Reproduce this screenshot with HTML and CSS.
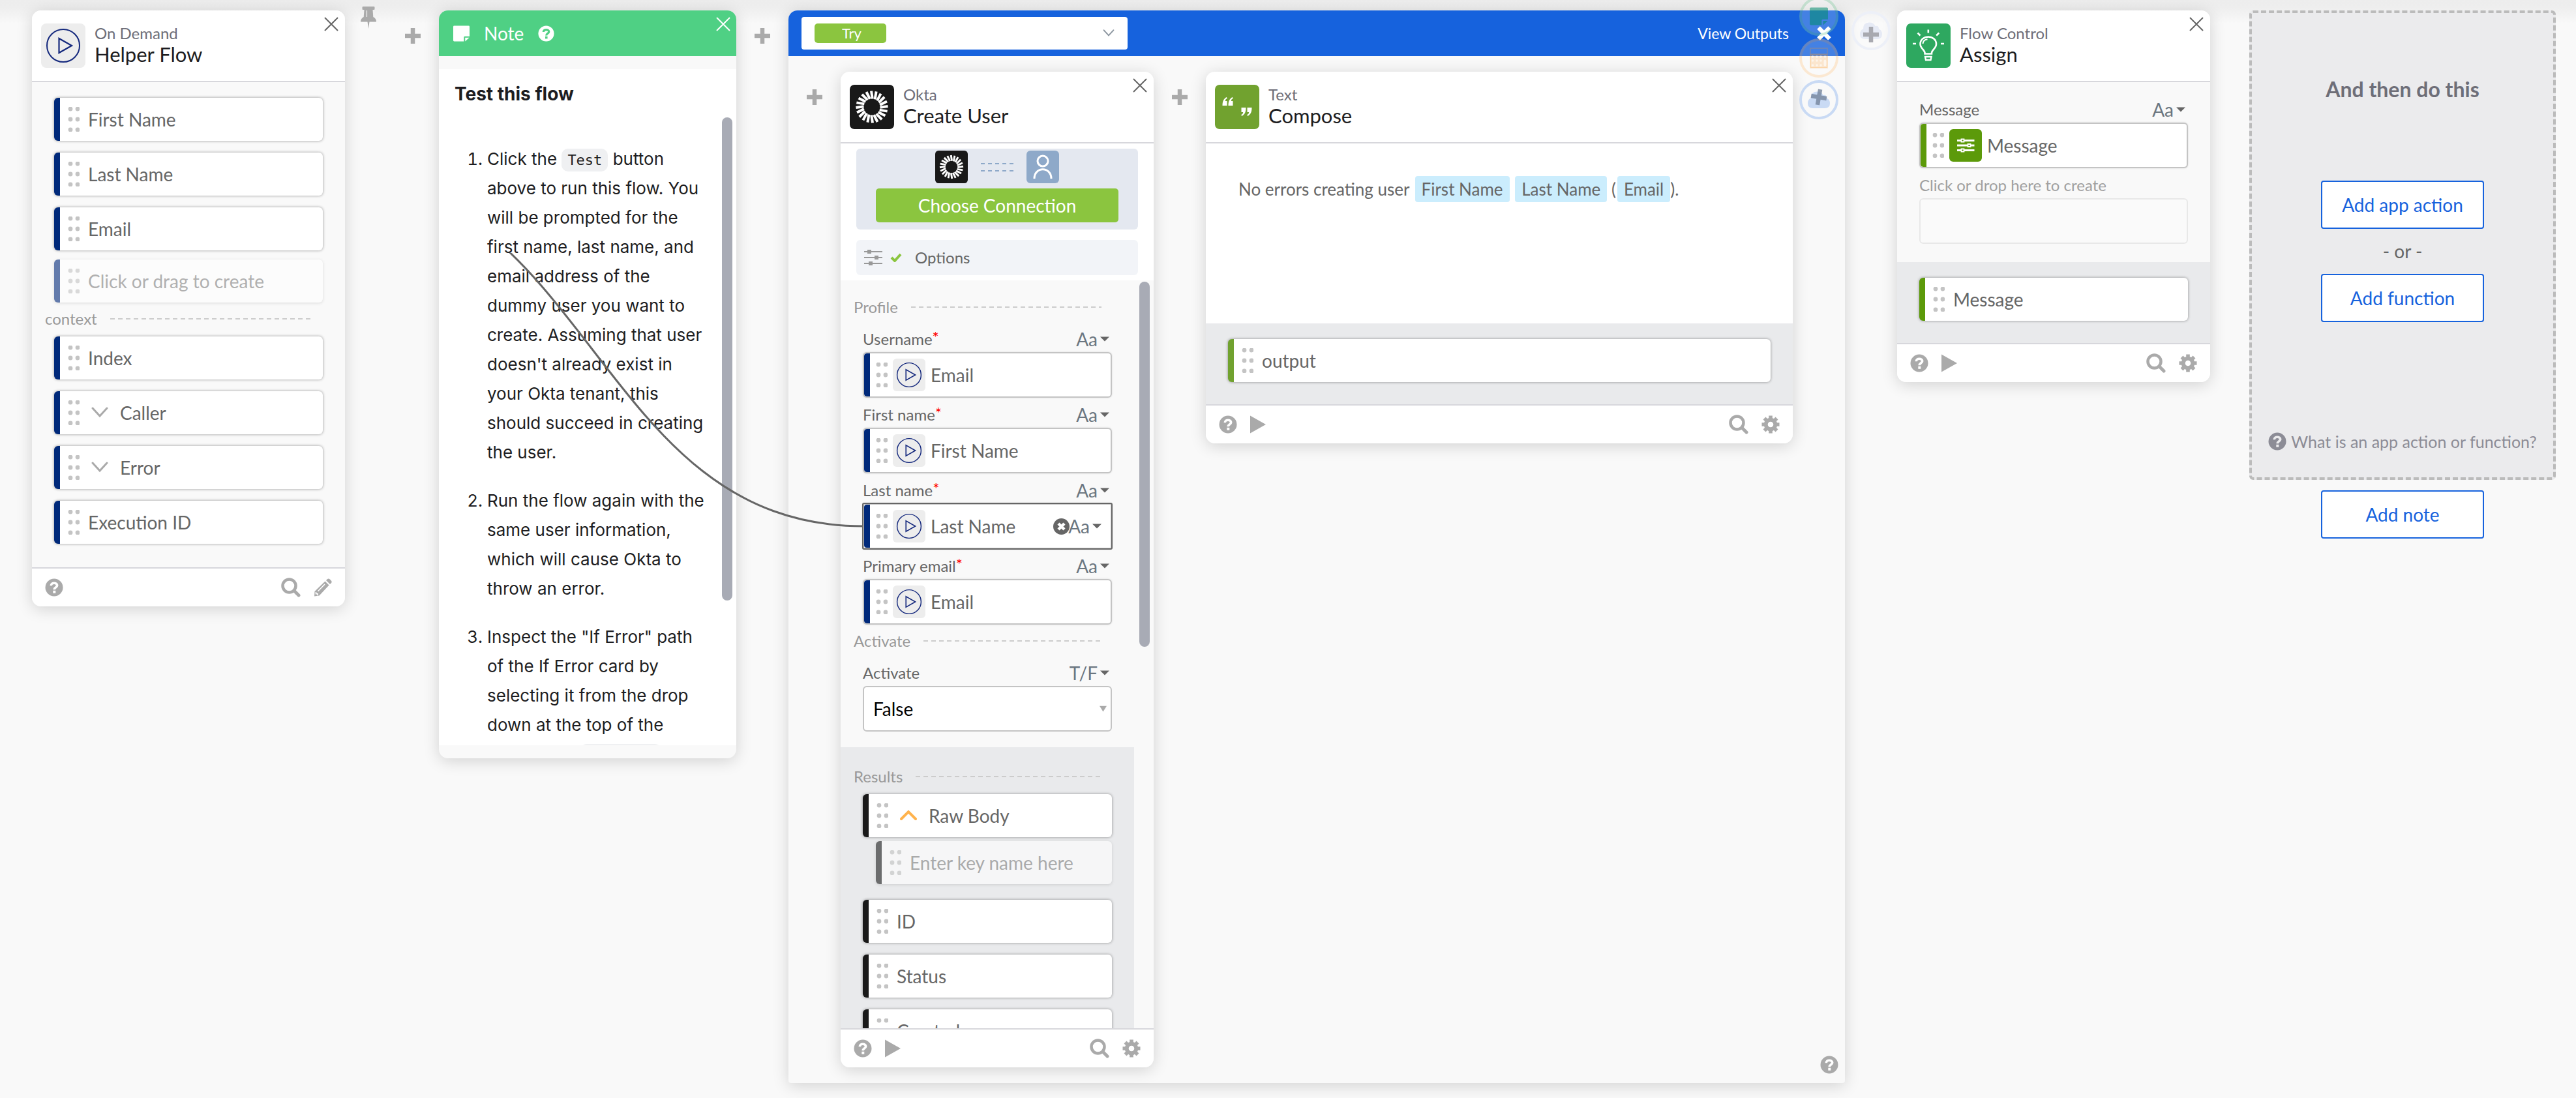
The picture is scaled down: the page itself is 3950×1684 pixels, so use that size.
FILE: index.html
```html
<!DOCTYPE html>
<html lang="en">
<head>
<meta charset="utf-8">
<title>Helper Flow</title>
<link rel="stylesheet" href="styles.css">
</head>
<body>
<svg class="sprite" aria-hidden="true">
  <symbol id="dots" viewBox="0 0 18 38"><g fill="#c4c4c4"><circle cx="4" cy="3" r="3.400"/><circle cx="15" cy="3" r="3.400"/><circle cx="4" cy="19" r="3.400"/><circle cx="15" cy="19" r="3.400"/><circle cx="4" cy="35" r="3.400"/><circle cx="15" cy="35" r="3.400"/></g></symbol>
  <symbol id="close" viewBox="0 0 22 22"><path d="M1 1 21 21M21 1 1 21" fill="none" stroke="currentColor" stroke-width="2"/></symbol>
  <symbol id="plus" viewBox="0 0 24 24"><path d="M2.500 12H21.500M12 2.500V21.500" fill="none" stroke="currentColor" stroke-width="6.500" stroke-linecap="square" stroke-linejoin="round"/></symbol>
  <symbol id="help" viewBox="0 0 28 28"><circle cx="14" cy="14" r="13.500" fill="currentColor"/><path d="M9.300 11.200C9.300 6 18.700 6.200 18.700 10.800C18.700 13.800 14.200 13.600 14.200 17.300" fill="none" stroke="var(--mark,#fff)" stroke-width="3.600"/><path d="M12.300 18.800h4v4h-4z" fill="var(--mark,#fff)"/></symbol>
  <symbol id="run" viewBox="0 0 24 28"><path d="M0 0.500 24 14 0 27.500Z" fill="currentColor"/></symbol>
  <symbol id="search" viewBox="0 0 30 30"><circle cx="12.500" cy="12.500" r="10" fill="none" stroke="currentColor" stroke-width="4.500"/><path d="M20 20 27 27" stroke="currentColor" stroke-width="5" stroke-linecap="round"/></symbol>
  <symbol id="gear" viewBox="0 0 28 28"><circle cx="14" cy="14" r="7.300" fill="none" stroke="currentColor" stroke-width="6"/><g stroke="currentColor" stroke-width="5.600"><path d="M14 .5V5M14 23v4.500M.5 14H5M23 14h4.500M4.500 4.500 7.700 7.700M20.300 20.300l3.200 3.200M23.500 4.500 20.300 7.700M7.700 20.300 4.500 23.500"/></g></symbol>
  <symbol id="pencil" viewBox="0 0 28 28"><g fill="currentColor"><path d="M17.500 4.500 23.500 10.500 8.500 26.500 1 27.500 1.500 20Z"/><path d="M19 3 21.200 1Q23 -.3 24.800 1.500L27 3.800Q28.300 5.500 26.800 7.200L25 9Z"/></g><path d="M17 9 6.500 19.800M3.500 21v2.700h2.600v2.600" fill="none" stroke="#fff" stroke-width="1.600"/></symbol>
  <symbol id="pin" viewBox="0 0 24 34"><path d="M3.500 0h17q1 0 1 1.500v2q0 1.500-1 1.500H18.500l.8 11Q24 18 24 23.500H0Q0 18 4.700 16L5.500 5H3.500q-1 0-1-1.500v-2Q2.500 0 3.500 0ZM10.500 23.500h3L12 34Z" fill="currentColor"/><path d="M9.500 6v10" stroke="#f6f6f6" stroke-width="1.200"/></symbol>
  <symbol id="caret" viewBox="0 0 13 8" preserveAspectRatio="none"><path d="M0 .5H13L6.500 7.500Z" fill="currentColor"/></symbol>
  <symbol id="down" viewBox="0 0 26 18"><path d="M2 2 13 14 24 2" fill="none" stroke="currentColor" stroke-width="3" stroke-linecap="round"/></symbol>
  <symbol id="up" viewBox="0 0 26 18"><path d="M2 14 13 3 24 14" fill="none" stroke="currentColor" stroke-width="4" stroke-linecap="round"/></symbol>
  <symbol id="play" viewBox="0 0 68 68"><rect width="68" height="68" rx="8" fill="#ededed"/><circle cx="34" cy="34" r="25" fill="none" stroke="#14287d" stroke-width="2"/><path d="M27.500 23V45L47 34Z" fill="none" stroke="#14287d" stroke-width="2.200"/></symbol>
  <symbol id="okta" viewBox="0 0 68 68"><rect width="68" height="68" rx="7" fill="#191919"/><g stroke="#fff" stroke-width="4"><g id="rays"><path id="ray" d="M33 9.500 34.800 21.500"/><use href="#ray" transform="rotate(18 34 34)"/><use href="#ray" transform="rotate(36 34 34)"/><use href="#ray" transform="rotate(54 34 34)"/><use href="#ray" transform="rotate(72 34 34)"/></g><use href="#rays" transform="rotate(90 34 34)"/><use href="#rays" transform="rotate(180 34 34)"/><use href="#rays" transform="rotate(270 34 34)"/></g></symbol>
  <symbol id="quotes" viewBox="0 0 68 68"><rect width="68" height="68" rx="7" fill="#71a22f"/><g fill="#fff"><path id="q" d="M18 19C13.500 21 11.500 25 11.500 32H18.500V25H15.800C15.900 23 16.800 21.800 18.700 21Z"/><use href="#q" x="9"/><use href="#q" transform="rotate(180 34 33.500)"/><use href="#q" transform="rotate(180 34 33.500) translate(9)"/></g></symbol>
  <symbol id="bulb" viewBox="0 0 68 68"><rect width="68" height="68" rx="7" fill="#2ea860"/><g fill="none" stroke="#fff" stroke-width="2.600"><path d="M28.500 46.500V45C28.500 41 21.500 38 21.500 31.500C21.500 25 27 20.500 33.800 20.500S46 25 46 31.500C46 38 39 41 39 45V46.500Z"/><path d="M25.500 31Q26 25 32.500 24.300" stroke-width="2"/><path d="M29 51H38.500L37.500 56H30Z" stroke-width="2.400"/><path d="M33.800 9.500v5M17.500 14.500l4 4M50.200 14.500l-4 4M10 31h5M53 31h5"/></g></symbol>
  <symbol id="person" viewBox="0 0 50 50"><rect width="50" height="50" rx="6" fill="#8ea9c9"/><g fill="none" stroke="#fff" stroke-width="3"><circle cx="25" cy="16" r="8"/><path d="M12 43C12 24 38 24 38 43"/></g></symbol>
  <symbol id="levels" viewBox="0 0 28 26"><path d="M0 4H28M0 13H28M0 22H28" stroke="currentColor" stroke-width="2"/><path d="M5 1h6v6H5zM16 10h6v6h-6zM7 19h6v6H7z" fill="currentColor"/></symbol>
  <symbol id="variable" viewBox="0 0 50 50"><rect width="50" height="50" rx="6" fill="#5c9a0a"/><g stroke="#fff"><path d="M12 17.500H38.500M12 25H38.500M12 32.500H38.500" stroke-width="3"/><path d="M18.500 15.500h4v4h-4zM28.500 23h4v4h-4zM18.500 30.500h4v4h-4z" fill="#5c9a0a" stroke-width="1.800"/></g></symbol>
  <symbol id="check" viewBox="0 0 18 14"><path d="M2 7 7 12 16 2" fill="none" stroke="#8bc53f" stroke-width="4"/></symbol>
  <symbol id="sticky" viewBox="0 0 26 25"><path d="M1.500 0H24.500Q26 0 26 1.500V17H18.500Q17 17 17 18.500V25H1.500Q0 25 0 23.500V1.500Q0 0 1.500 0ZM19 19H25.500L19 25Z" fill="currentColor"/></symbol>
  <symbol id="calc" viewBox="0 0 28 32"><path d="M1 1H27V31H1ZM1 10H27" fill="none" stroke="currentColor" stroke-width="2"/><path d="M1 10H27V31H1Z" fill="currentColor"/><g fill="var(--mark,#fff)"><circle cx="4.500" cy="14" r="1.800"/><circle cx="11" cy="14" r="1.800"/><circle cx="17" cy="14" r="1.800"/><circle cx="23.500" cy="14" r="1.800"/><circle cx="4.500" cy="20" r="1.800"/><circle cx="11" cy="20" r="1.800"/><circle cx="17" cy="20" r="1.800"/><circle cx="4.500" cy="27" r="1.800"/><circle cx="11" cy="27" r="1.800"/><circle cx="17" cy="27" r="1.800"/><rect x="21.500" y="18.500" width="4" height="10" rx="2"/></g></symbol>
  <symbol id="cloud" viewBox="0 0 34 26"><path d="M8 26Q0 26 0 18.500Q0 12 5 10.500Q4.500 1 14 .5Q21 .3 23.500 6Q29 4.500 29 10.500Q34 12.500 34 18.500Q34 26 26 26Z" fill="currentColor"/></symbol>
  <symbol id="clear" viewBox="0 0 25 25"><circle cx="12.500" cy="12.500" r="12.500" fill="#666"/><path d="M8 8 17 17M17 8 8 17" stroke="#fff" stroke-width="4.500"/></symbol>
</svg>

<main class="canvas">
  <article class="card navy">
    <header class="card-head">
      <svg class="app"><use href="#play"/></svg>
      <div class="names"><p>On Demand</p><h2>Helper Flow</h2></div>
      <button class="close" aria-label="Close"><svg><use href="#close"/></svg></button>
    </header>
    <div class="card-body inputs">
      <ul class="slots">
        <li class="slot"><svg class="dots"><use href="#dots"/></svg>First Name</li>
        <li class="slot"><svg class="dots"><use href="#dots"/></svg>Last Name</li>
        <li class="slot"><svg class="dots"><use href="#dots"/></svg>Email</li>
        <li class="slot draft"><svg class="dots"><use href="#dots"/></svg><input type="text" aria-label="New input" placeholder="Click or drag to create"></li>
      </ul>
      <h3 class="divider">context</h3>
      <ul class="slots">
        <li class="slot"><svg class="dots"><use href="#dots"/></svg>Index</li>
        <li class="slot"><svg class="dots"><use href="#dots"/></svg><svg class="fold"><use href="#down"/></svg>Caller</li>
        <li class="slot"><svg class="dots"><use href="#dots"/></svg><svg class="fold"><use href="#down"/></svg>Error</li>
        <li class="slot"><svg class="dots"><use href="#dots"/></svg>Execution ID</li>
      </ul>
    </div>
    <footer class="card-foot">
      <button aria-label="Help"><svg class="i28"><use href="#help"/></svg></button>
      <button class="end" aria-label="Search"><svg class="i30"><use href="#search"/></svg></button>
      <button aria-label="Edit"><svg class="i28"><use href="#pencil"/></svg></button>
    </footer>
  </article>

  <div class="link start">
    <button class="pin" aria-label="Pin"><svg><use href="#pin"/></svg></button>
    <button class="add" aria-label="Add step"><svg><use href="#plus"/></svg></button>
  </div>

  <article class="card note">
    <header class="note-head">
      <svg class="sticky"><use href="#sticky"/></svg>
      <h2>Note</h2>
      <button class="help" aria-label="Help"><svg><use href="#help"/></svg></button>
      <button class="close" aria-label="Close"><svg><use href="#close"/></svg></button>
    </header>
    <div class="note-body">
      <h3>Test this flow</h3>
      <div class="note-scroll">
        <ol>
          <li>Click the <code>Test</code> button above to run this flow. You will be prompted for the first name, last name, and email address of the dummy user you want to create. Assuming that user doesn't already exist in your Okta tenant, this should succeed in creating the user.</li>
          <li>Run the flow again with the same user information, which will cause Okta to throw an error.</li>
          <li>Inspect the "If Error" path of the If Error card by selecting it from the drop down at the top of the card. Open <code>If Error</code></li>
        </ol>
        <div class="thumb"></div>
      </div>
    </div>
  </article>

  <div class="link"><button class="add" aria-label="Add step"><svg><use href="#plus"/></svg></button></div>

  <section class="group">
    <header class="group-head">
      <div class="route">
        <select aria-label="Path"><option>Try</option><option>If Error</option></select>
        <svg><use href="#down"/></svg>
      </div>
      <button class="outputs">View Outputs</button>
      <button class="close" aria-label="Close"><svg><use href="#plus"/></svg></button>
    </header>
    <div class="group-body">
      <div class="link inner"><button class="add" aria-label="Add step"><svg><use href="#plus"/></svg></button></div>

      <article class="card navy create">
        <header class="card-head">
          <svg class="app"><use href="#okta"/></svg>
          <div class="names"><p>Okta</p><h2>Create User</h2></div>
          <button class="close" aria-label="Close"><svg><use href="#close"/></svg></button>
        </header>
        <div class="setup">
          <div class="connection">
            <div class="pair"><svg><use href="#okta"/></svg><i class="wire"></i><svg><use href="#person"/></svg></div>
            <button class="choose">Choose Connection</button>
          </div>
          <button class="options"><svg class="levels"><use href="#levels"/></svg><svg class="check"><use href="#check"/></svg>Options</button>
        </div>
        <div class="scroll">
          <div class="scroll-content">
            <section class="fields">
              <h3 class="divider">Profile</h3>
              <div class="label"><span id="l1">Username<sup>*</sup></span><button class="type">Aa<svg><use href="#caret"/></svg></button></div>
              <div class="field" role="group" aria-labelledby="l1"><svg class="dots"><use href="#dots"/></svg><svg class="chip"><use href="#play"/></svg>Email</div>
              <div class="label"><span id="l2">First name<sup>*</sup></span><button class="type">Aa<svg><use href="#caret"/></svg></button></div>
              <div class="field" role="group" aria-labelledby="l2"><svg class="dots"><use href="#dots"/></svg><svg class="chip"><use href="#play"/></svg>First Name</div>
              <div class="label"><span id="l3">Last name<sup>*</sup></span><button class="type">Aa<svg><use href="#caret"/></svg></button></div>
              <div class="field current" role="group" aria-labelledby="l3"><svg class="dots"><use href="#dots"/></svg><svg class="chip"><use href="#play"/></svg>Last Name
                <button class="clear" aria-label="Clear"><svg><use href="#clear"/></svg></button><button class="type">Aa<svg><use href="#caret"/></svg></button></div>
              <div class="label"><span id="l4">Primary email<sup>*</sup></span><button class="type">Aa<svg><use href="#caret"/></svg></button></div>
              <div class="field" role="group" aria-labelledby="l4"><svg class="dots"><use href="#dots"/></svg><svg class="chip"><use href="#play"/></svg>Email</div>
              <h3 class="divider">Activate</h3>
              <div class="label"><label for="activate">Activate</label><button class="type">T/F<svg><use href="#caret"/></svg></button></div>
              <div class="choice"><select id="activate"><option>False</option><option>True</option></select><svg><use href="#caret"/></svg></div>
            </section>
            <section class="results black">
              <h3 class="divider">Results</h3>
              <ul class="slots">
                <li class="slot"><svg class="dots"><use href="#dots"/></svg><svg class="fold open"><use href="#up"/></svg>Raw Body</li>
                <li class="slot draft child"><svg class="dots"><use href="#dots"/></svg><input type="text" aria-label="Key name" placeholder="Enter key name here"></li>
                <li class="slot after"><svg class="dots"><use href="#dots"/></svg>ID</li>
                <li class="slot"><svg class="dots"><use href="#dots"/></svg>Status</li>
                <li class="slot"><svg class="dots"><use href="#dots"/></svg>Created</li>
              </ul>
            </section>
          </div>
          <div class="track"><div class="thumb"></div></div>
        </div>
        <footer class="card-foot">
          <button aria-label="Help"><svg class="i28"><use href="#help"/></svg></button>
          <button aria-label="Run"><svg class="run"><use href="#run"/></svg></button>
          <button class="end" aria-label="Search"><svg class="i30"><use href="#search"/></svg></button>
          <button aria-label="Settings"><svg class="i28"><use href="#gear"/></svg></button>
        </footer>
      </article>

      <div class="link inner"><button class="add" aria-label="Add step"><svg><use href="#plus"/></svg></button></div>

      <article class="card compose olive">
        <header class="card-head">
          <svg class="app"><use href="#quotes"/></svg>
          <div class="names"><p>Text</p><h2>Compose</h2></div>
          <button class="close" aria-label="Close"><svg><use href="#close"/></svg></button>
        </header>
        <p class="template">No errors creating user <span class="token">First Name</span> <span class="token">Last Name</span> (<span class="token">Email</span>).</p>
        <div class="out">
          <ul class="slots"><li class="slot"><svg class="dots"><use href="#dots"/></svg>output</li></ul>
        </div>
        <footer class="card-foot">
          <button aria-label="Help"><svg class="i28"><use href="#help"/></svg></button>
          <button aria-label="Run"><svg class="run"><use href="#run"/></svg></button>
          <button class="end" aria-label="Search"><svg class="i30"><use href="#search"/></svg></button>
          <button aria-label="Settings"><svg class="i28"><use href="#gear"/></svg></button>
        </footer>
      </article>

      <div class="link inner last">
        <nav class="rings" aria-label="Insert">
          <button class="ring green" aria-label="Add note"><svg class="i28"><use href="#sticky"/></svg></button>
          <button class="ring orange" aria-label="Add function"><svg class="i32"><use href="#calc"/></svg></button>
          <button class="ring blue" aria-label="Add app action"><svg class="i34"><use href="#cloud"/></svg><svg class="over tilt"><use href="#plus"/></svg></button>
        </nav>
        <button class="group-help" aria-label="Help"><svg class="i28"><use href="#help"/></svg></button>
      </div>
    </div>
    <svg class="wire-line" viewBox="781 388 543 422" aria-hidden="true"><path d="M495 267C909 267 909 807 1324 807" fill="none" stroke="#666" stroke-width="3"/></svg>
  </section>

  <div class="link"><button class="ring faint" aria-label="Add app action"><svg class="i34"><use href="#cloud"/></svg><svg class="over"><use href="#plus"/></svg></button></div>

  <article class="card green-bar assign">
    <header class="card-head">
      <svg class="app"><use href="#bulb"/></svg>
      <div class="names"><p>Flow Control</p><h2>Assign</h2></div>
      <button class="close" aria-label="Close"><svg><use href="#close"/></svg></button>
    </header>
    <section class="fields">
      <div class="label"><span id="l5">Message</span><button class="type">Aa<svg><use href="#caret"/></svg></button></div>
      <div class="field" role="group" aria-labelledby="l5"><svg class="dots"><use href="#dots"/></svg><svg class="chip"><use href="#variable"/></svg>Message</div>
      <div class="label muted"><label for="new-output">Click or drop here to create</label></div>
      <input class="blank" id="new-output" type="text">
    </section>
    <div class="out">
      <ul class="slots"><li class="slot"><svg class="dots"><use href="#dots"/></svg>Message</li></ul>
    </div>
    <footer class="card-foot">
      <button aria-label="Help"><svg class="i28"><use href="#help"/></svg></button>
      <button aria-label="Run"><svg class="run"><use href="#run"/></svg></button>
      <button class="end" aria-label="Search"><svg class="i30"><use href="#search"/></svg></button>
      <button aria-label="Settings"><svg class="i28"><use href="#gear"/></svg></button>
    </footer>
  </article>

  <aside class="next">
    <div class="drop">
      <h2>And then do this</h2>
      <button class="action">Add app action</button>
      <p class="or">- or -</p>
      <button class="action">Add function</button>
      <a class="what" href="#help"><svg class="i28"><use href="#help"/></svg>What is an app action or function?</a>
    </div>
    <button class="action">Add note</button>
  </aside>
</main>
</body>
</html>
```

FILE: styles.css
```css
* { box-sizing: border-box; }
body, h2, h3, p, ul, ol { margin: 0; padding: 0; }
h2, h3 { font-size: 28px; font-weight: 400; }
ul { list-style: none; }

body {
  background: #f9f9f9;
  color: #666;
  font: 28px/40px Lato, "Open Sans", sans-serif;
}

button, input, select { font: inherit; color: inherit; }
button { display: flex; align-items: center; justify-content: center; padding: 0; border: 0; background: none; cursor: pointer; }
svg { display: block; flex: none; }
.sprite { position: absolute; width: 0; height: 0; }
.i28 { width: 28px; height: 28px; }
.i30 { width: 30px; height: 30px; }
.i32 { width: 32px; height: 32px; }
.i34 { width: 34px; height: 28px; }
.run { width: 24px; height: 28px; }

.navy { --bar: #00297a; }
.black { --bar: #191919; }
.olive { --bar: #71a22f; }
.green-bar { --bar: #5c9a0a; }

.canvas {
  display: flex;
  align-items: flex-start;
  min-height: 100vh;
  padding: 16px 31px 23px 49px;
  background: linear-gradient(#ededed, #eee 12px, #f9f9f9 36px);
}

/* cards */
.card {
  flex: none;
  width: 480px;
  border-radius: 14px;
  background: #f9f9f9;
  box-shadow: 0 4px 24px rgba(0, 0, 0, .16);
}
.card-head {
  display: flex;
  align-items: flex-start;
  gap: 14px;
  padding: 20px 10px 20px 14px;
  border-bottom: 2px solid #d7d7dc;
  border-radius: 14px 14px 0 0;
  background: #fff;
}
.app { width: 68px; height: 68px; }
.names p { font-size: 24px; line-height: 30px; color: #6e6e78; }
.names h2 { font-size: 31px; line-height: 34px; color: #1d1d21; }
.close { margin: -10px 0 0 auto; color: #666; }
.close svg { width: 22px; height: 22px; }
.card-foot {
  display: flex;
  align-items: center;
  gap: 20px;
  height: 60px;
  padding: 0 20px;
  border-top: 2px solid #d7d7dc;
  border-radius: 0 0 14px 14px;
  background: #fff;
  color: #aaa;
}
.end { margin-left: auto; }

/* slots */
.inputs { padding: 24px 0 36px; }
.slots { display: flex; flex-direction: column; gap: 18px; padding: 0 34px; }
.slot {
  display: flex;
  align-items: center;
  height: 66px;
  padding-left: 12px;
  border-left: 9px solid var(--bar);
  border-radius: 6px;
  background: #fff;
  box-shadow: 0 0 4px rgba(0, 0, 0, .4);
}
.dots { width: 18px; height: 38px; margin-right: 13px; overflow: visible; }
.draft { margin-top: -4px; opacity: .6; box-shadow: 0 1px 4px rgba(0, 0, 0, .2); }
.draft input { width: 100%; min-width: 0; padding: 0; border: 0; background: none; }
.draft input::placeholder { color: #808080; opacity: 1; }
.child { margin: -12px 0 0 20px; }
.after { margin-top: 6px; }
.fold { width: 26px; height: 18px; margin: 0 18px 0 5px; color: #aaa; }
.open { color: #ffb34d; }

.divider {
  display: flex;
  align-items: center;
  gap: 20px;
  height: 48px;
  padding: 2px 50px 0 20px;
  font-size: 24px;
  color: #999;
}
.divider::after {
  content: "";
  flex: 1;
  height: 2px;
  background: repeating-linear-gradient(90deg, #ccc 0 7px, transparent 7px 12px);
}
.divider + .slots { margin-top: 4px; }

/* connectors between cards */
.link { position: relative; display: flex; flex: none; justify-content: center; width: 80px; padding-top: 27px; color: #aaa; }
.add svg { width: 24px; height: 24px; }
.start { width: 144px; justify-content: flex-start; align-items: flex-start; padding-left: 24px; gap: 44px; }
.pin { margin-top: -33px; }
.pin svg { width: 24px; height: 34px; }
.inner { padding-top: 51px; }

/* note */
.note { width: 456px; padding-bottom: 20px; color: #1d1d21; }
.note-head {
  display: flex;
  align-items: center;
  height: 70px;
  padding: 0 9px 0 22px;
  border-radius: 14px 14px 0 0;
  background: #4fd084;
  color: #fff;
  --mark: #4fd084;
}
.note-head h2 { margin: 0 22px; }
.sticky, .help svg { width: 25px; height: 25px; }
.note-head .close { align-self: flex-start; margin-top: 10px; color: #fff; }
.note-body {
  margin-top: 20px;
  background: #fff;
  font-family: Inter, "Noto Sans", sans-serif;
  font-size: 26px;
  line-height: 45px;
}
.note-body h3 { padding: 16px 0 14px 24px; font-size: 28px; font-weight: 700; line-height: 44px; }
.note-scroll { display: flex; justify-content: space-between; height: 963px; overflow: hidden; }
.note ol { width: 412px; padding: 41px 0 0 74px; }
.note li { margin-bottom: 29px; }
.note code {
  padding: 5px 9px;
  border-radius: 10px;
  background: #eff0f2;
  font: 22px/26px "DejaVu Sans Mono", monospace;
}
.thumb { width: 16px; border-radius: 8px; background: #a8abb5; }
.note .thumb { height: 741px; margin-right: 6px; }

/* branch group */
.group { position: relative; flex: 1; border-radius: 14px 14px 4px 4px; background: #f9f9f9; box-shadow: 0 4px 24px rgba(0, 0, 0, .16); }
.group-head {
  display: flex;
  align-items: center;
  height: 70px;
  padding: 0 20px;
  border-radius: 14px 14px 0 0;
  background: #1662dd;
  color: #fff;
}
.route { display: grid; position: relative; align-items: center; width: 500px; height: 50px; border-radius: 4px; background: #fff; z-index: 0; }
.route::before { content: ""; grid-area: 1 / 1; width: 110px; height: 30px; margin-left: 20px; border-radius: 5px; background: #8bc53f; }
.route select { grid-area: 1 / 1; height: 50px; padding: 0 0 0 62px; border: 0; appearance: none; background: none; font-size: 22px; }
.route svg { grid-area: 1 / 1; justify-self: end; width: 18px; height: 12px; margin-right: 20px; color: #8c96a0; pointer-events: none; }
.outputs { margin: 0 42px 0 auto; font-size: 23px; }
.group-head .close { margin: 0; color: #fff; transform: rotate(45deg); }
.group-head .close svg { width: 24px; height: 24px; }
.group-body { display: flex; align-items: flex-start; }
.group-body .card { margin: 24px 0; }
.wire-line { position: absolute; top: 372px; left: -428px; width: 543px; height: 422px; pointer-events: none; }

.setup { padding: 8px 24px; background: #fff; }
.connection { height: 124px; padding: 3px 30px 0; border-radius: 6px; background: #e4e8f0; }
.pair { display: flex; justify-content: center; align-items: center; gap: 20px; margin-bottom: 8px; }
.pair svg { width: 50px; height: 50px; }
.wire { width: 50px; height: 13px; background: repeating-linear-gradient(90deg, transparent 0 6px, #e4e8f0 6px 11px), linear-gradient(#8ea9c9 2px, transparent 2px 11px, #8ea9c9 11px); }
.choose { width: 100%; height: 52px; border-radius: 5px; background: #8bc53f; color: #fff; font-size: 28px; }
.options { justify-content: flex-start; width: 100%; height: 54px; margin-top: 16px; padding-left: 12px; border-radius: 6px; background: #f2f4f8; font-size: 24px; }
.levels { width: 28px; height: 26px; color: #999; }
.check { width: 18px; height: 14px; margin: 0 20px 0 12px; }

.scroll { display: flex; height: 1147px; overflow: hidden; }
.scroll-content { flex: 1; min-width: 0; }
.track { flex: none; width: 30px; padding: 2px 0 0 8px; }
.track .thumb { height: 560px; }
.fields { padding: 16px 34px 24px; }
.fields .divider { margin: 0 -34px; }
.label { display: flex; align-items: center; justify-content: space-between; height: 46px; padding: 6px 4px 0 0; font-size: 24px; line-height: 32px; }
.label sup { color: #f00; font-size: 24px; line-height: 0; vertical-align: 3px; }
.muted { color: #a0a0a0; }
.type { gap: 4px; color: #6b7680; font-size: 28px; line-height: 32px; }
.type svg { width: 14px; height: 8px; color: #666; }
.field, .choice, .blank {
  display: flex;
  align-items: center;
  width: 100%;
  height: 70px;
  border: 2px solid #c4c4c4;
  border-radius: 6px;
  background: #fff;
}
.field { overflow: hidden; box-shadow: 0 0 3px rgba(0, 0, 0, .12); }
.field::before { content: ""; width: 9px; height: 66px; background: var(--bar); border-radius: 4px 0 0 4px; }
.field .dots { margin: 0 8px 0 9px; }
.chip { width: 50px; height: 50px; margin-right: 8px; }
.current { outline: 2px solid #666; outline-offset: -1px; border-radius: 2px; }
.clear { margin: 0 -2px 0 auto; }
.clear svg { width: 25px; height: 25px; }
.current .type { margin-right: 14px; }
.choice select { flex: 1; height: 66px; padding-left: 14px; border: 0; appearance: none; background: none; color: #000; }
.choice svg { width: 11px; height: 10px; margin-right: 6px; color: #aaa; }
.blank { padding: 0 12px; border-color: #e8e8e8; background: #fafafa; }
.results { padding-top: 20px; background: #e9eaec; }
.out { padding: 24px 0 34px; background: #e9eaec; }
.assign .fields { padding-bottom: 28px; }

.group-body .compose { flex: 1; }
.template { height: 276px; padding: 50px; background: #fff; font-size: 26px; }
.token { display: inline-block; margin-left: 2px; padding: 0 10px; border-radius: 4px; background: #cbedfd; }

/* insert rings */
.last { align-self: stretch; flex-direction: column; justify-content: flex-end; align-items: flex-end; padding-bottom: 14px; }
.group-help { margin-right: 10px; }
.rings { position: absolute; top: -91px; left: 10px; display: flex; flex-direction: column; gap: 4px; z-index: 1; }
.ring { position: relative; width: 60px; height: 60px; border: 4px solid; border-radius: 50%; background: rgba(255, 255, 255, .2); }
.green { border-color: rgba(46, 168, 96, .22); color: rgba(0, 140, 110, .55); }
.orange { border-color: rgba(255, 150, 30, .18); color: rgba(255, 150, 30, .2); --mark: rgba(255, 255, 255, .6); }
.blue { border-color: #c9daf4; color: #c9daf4; background: #f9f9f9; }
.over { position: absolute; top: 14px; left: 14px; width: 24px; height: 24px; color: rgba(110, 125, 150, .75); }
.tilt { transform: rotate(10deg); top: 10px; }
.faint { margin-top: -26px; border-color: #edf0f8; color: #e6eaf5; }
.faint .over { top: 20px; color: #a8a9b0; }

/* end of flow */
.next { display: flex; flex: none; flex-direction: column; align-items: center; gap: 16px; width: 470px; margin-left: 60px; }
.drop {
  display: flex;
  flex-direction: column;
  align-items: center;
  width: 100%;
  padding: 97px 0 35px;
  border: 4px dashed #bbb;
  border-radius: 6px;
  background: #ebebed;
}
.drop h2 { margin-bottom: 120px; font-size: 32px; font-weight: 700; color: #6e6e78; }
.action { width: 250px; height: 74px; border: 2px solid #1662dd; border-radius: 4px; background: #fff; color: #1662dd; }
.or { line-height: 69px; }
.what { display: flex; align-items: center; gap: 7px; margin-top: 163px; color: #8c8c96; font-size: 25px; text-decoration: none; --mark: #ebebed; }
```
